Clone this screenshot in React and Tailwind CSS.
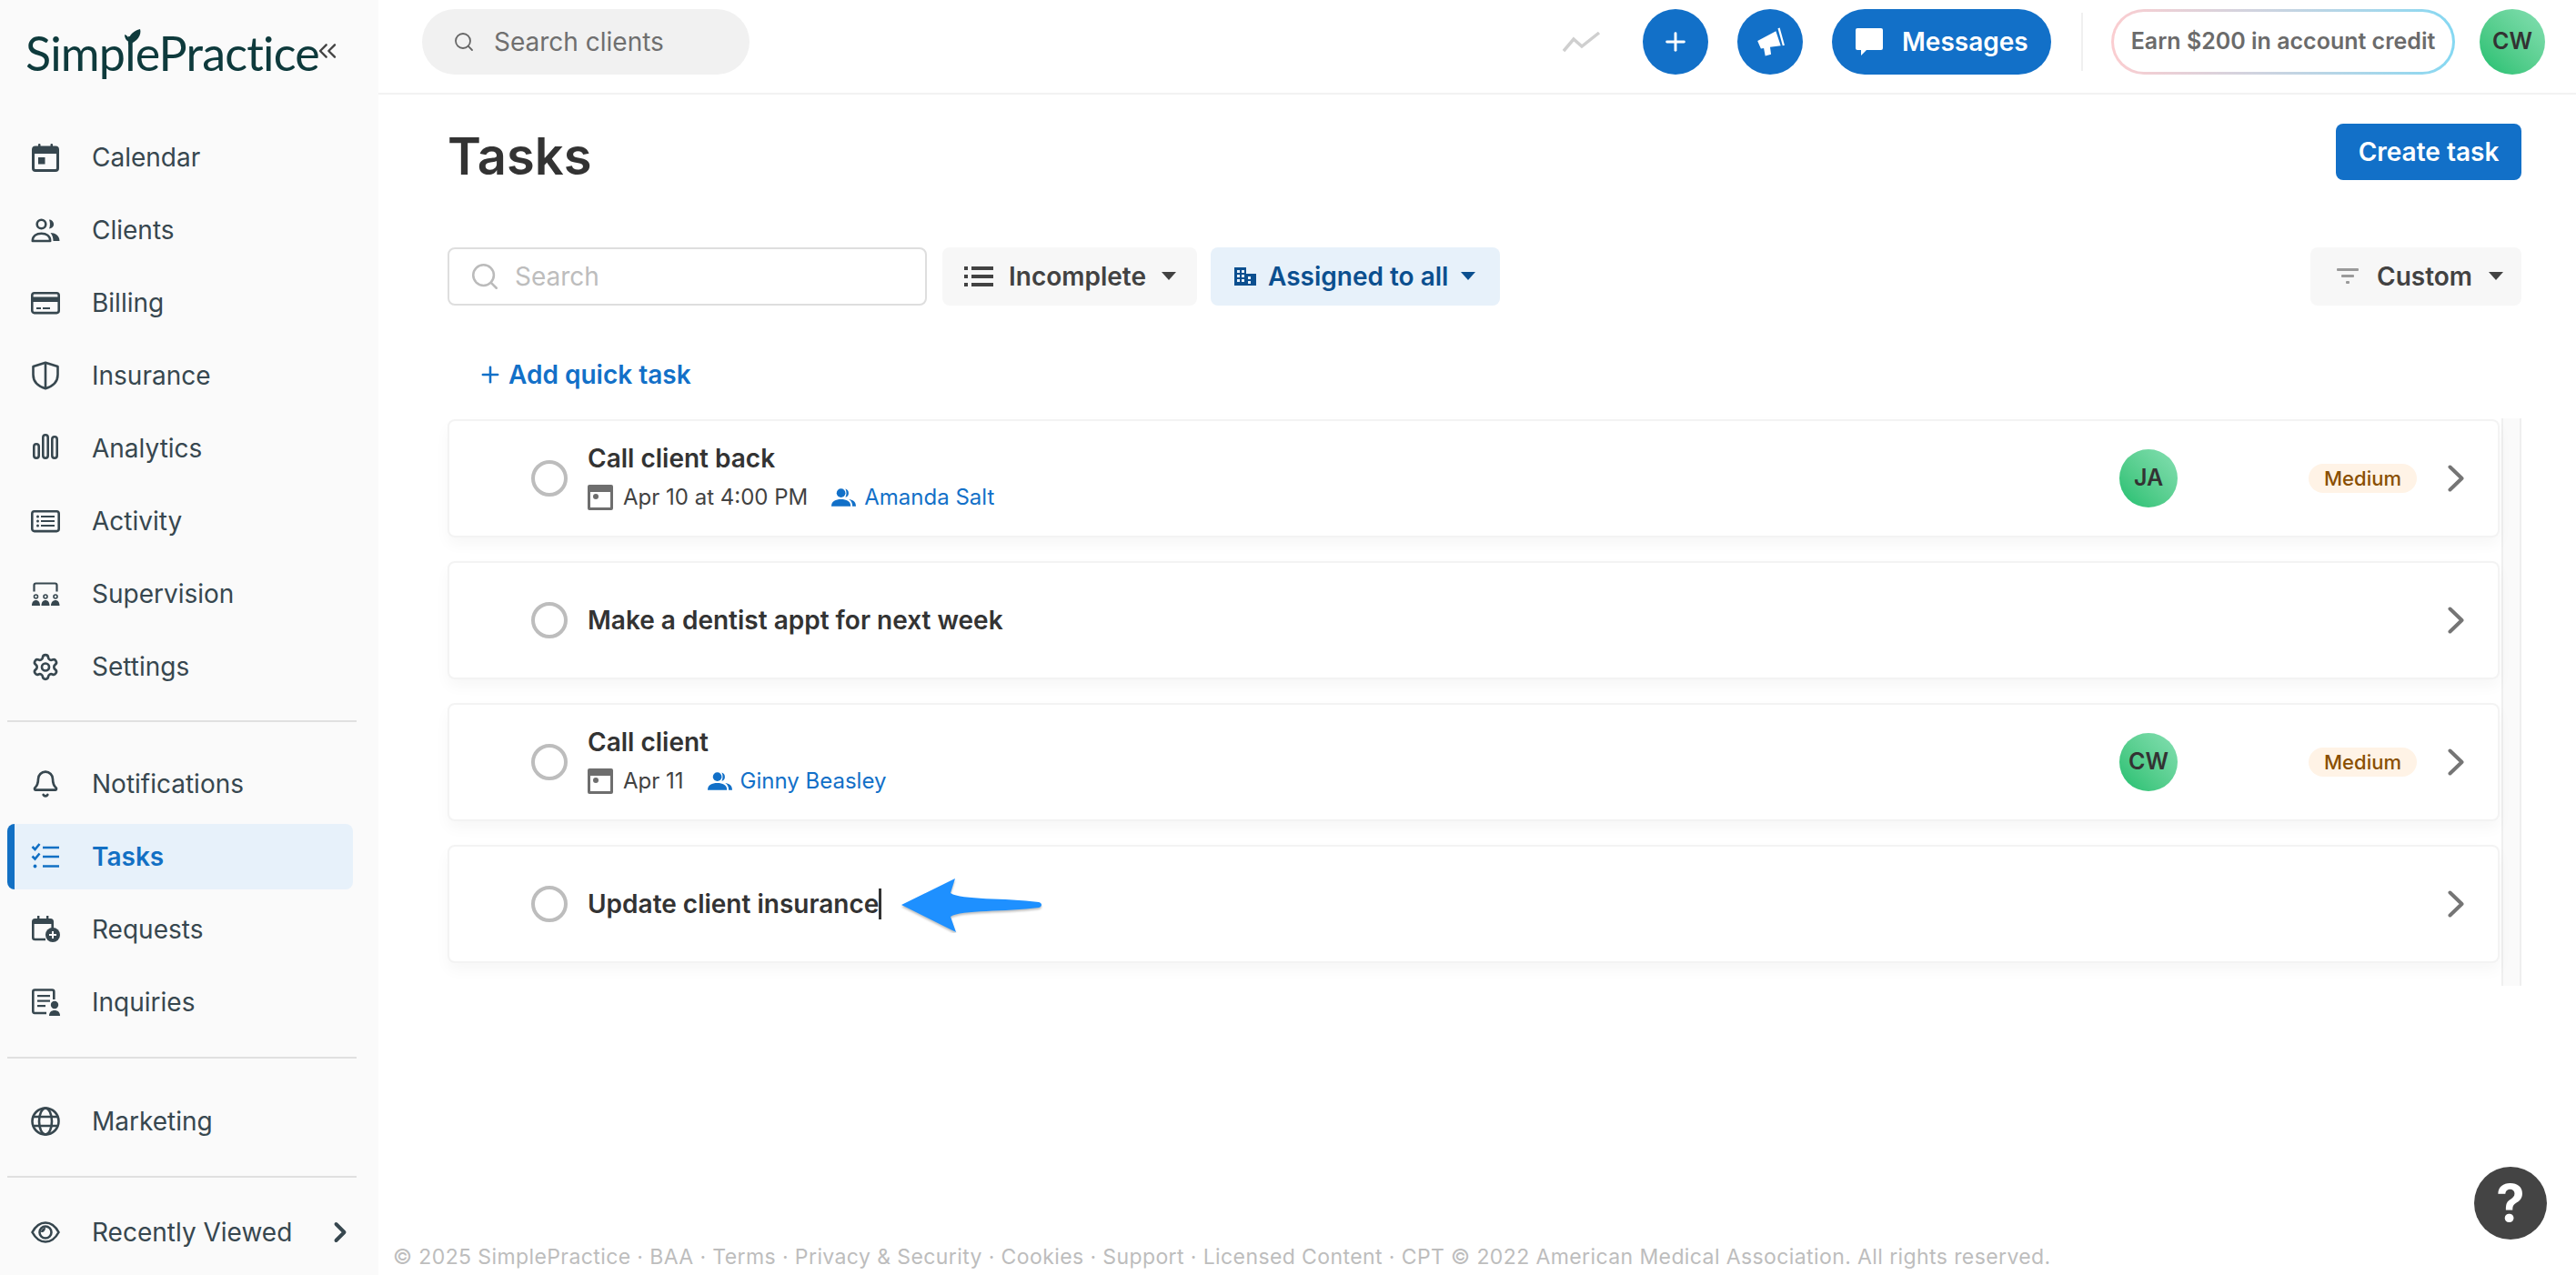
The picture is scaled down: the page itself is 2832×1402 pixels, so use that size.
import React from "react";
import { Settings, Bell, Search, ChevronRight, ChevronsLeft, Plus } from "lucide-react";

const ink = "#37474f";

const CalendarIcon = () => (
  <svg viewBox="0 0 32 32" className="w-8 h-8" fill={ink}>
    <rect x="2.5" y="5" width="27" height="25.5" rx="2.5" fill="none" stroke={ink} strokeWidth="3" />
    <rect x="2" y="5" width="28" height="7" rx="2" />
    <rect x="8" y="1" width="2.5" height="5" rx="1" />
    <rect x="21.5" y="1" width="2.5" height="5" rx="1" />
    <rect x="8" y="16" width="7.5" height="7.5" />
  </svg>
);

const ClientsIcon = () => (
  <svg viewBox="0 0 32 32" className="w-8 h-8" fill="none" stroke={ink} strokeWidth="2.6">
    <circle cx="11.5" cy="9.5" r="4.8" />
    <path d="M1.8 28c0-5.5 4.4-8.2 9.7-8.2s9.7 2.7 9.7 8.2z" strokeLinejoin="round" />
    <path d="M20 4.4a5.1 5.1 0 0 1 0 10.2c1.3-3 1.3-7.2 0-10.2z" fill={ink} stroke="none" />
    <path d="M21.5 19c5 .2 10 2.800 10 9h-7c0-3.600-1-6.600-3-9z" fill={ink} stroke="none" />
  </svg>
);

const BillingIcon = () => (
  <svg viewBox="0 0 32 32" className="w-8 h-8" fill={ink}>
    <rect x="1.3" y="5.300" width="29.400" height="21.800" rx="2.500" fill="none" stroke={ink} strokeWidth="2.600" />
    <rect x="1.500" y="9.500" width="29" height="5.500" />
    <rect x="6" y="21" width="5" height="2" />
    <rect x="13" y="21" width="8" height="2" />
  </svg>
);

const ShieldIcon = () => (
  <svg viewBox="0 0 32 32" className="w-8 h-8" fill="none" stroke={ink} strokeWidth="2.600" strokeLinejoin="round">
    <path d="M16 1.800 29.500 6v9c0 7.500-5.500 12.800-13.500 15.300C8 27.800 2.500 22.500 2.500 15V6z" />
    <path d="M16 2v28" />
  </svg>
);

const AnalyticsIcon = () => (
  <svg viewBox="0 0 32 32" className="w-8 h-8" fill="none" stroke={ink} strokeWidth="2.600">
    <rect x="3.300" y="11.300" width="5.400" height="15.400" rx="2.700" />
    <rect x="13.300" y="1.300" width="5.400" height="25.400" rx="2.700" />
    <rect x="23.300" y="3.300" width="5.400" height="23.400" rx="2.700" />
  </svg>
);

const ActivityIcon = () => (
  <svg viewBox="0 0 32 32" className="w-8 h-8" fill={ink}>
    <rect x="1.300" y="5.300" width="29.400" height="21.800" rx="2.500" fill="none" stroke={ink} strokeWidth="2.600" />
    <circle cx="7.500" cy="11" r="1.500" />
    <circle cx="7.500" cy="16" r="1.500" />
    <circle cx="7.500" cy="21" r="1.500" />
    <rect x="11" y="10" width="15" height="2" />
    <rect x="11" y="15" width="15" height="2" />
    <rect x="11" y="20" width="15" height="2" />
  </svg>
);

const SupervisionIcon = () => (
  <svg viewBox="0 0 32 32" className="w-8 h-8" fill={ink}>
    <path d="M3.500 13.500V6.500q0-2 2-2h21q2 0 2 2v7" fill="none" stroke={ink} strokeWidth="2.200" />
    <circle cx="5.500" cy="19" r="2" fill="none" stroke={ink} strokeWidth="1.600" />
    <circle cx="16" cy="19" r="2" fill="none" stroke={ink} strokeWidth="1.600" />
    <circle cx="27" cy="19" r="2" fill="none" stroke={ink} strokeWidth="1.600" />
    <path d="M1 29c0-4 2-6 4.500-6s4.500 2 4.500 6zM11.500 29c0-4 2-6 4.500-6s4.500 2 4.500 6zM22 29c0-4 2.500-6 5-6s4.500 2 4.500 6z" />
  </svg>
);

const TasksIcon = () => (
  <svg viewBox="0 0 32 32" className="w-8 h-8" fill="none" stroke="#1270c4" strokeWidth="2.600">
    <path d="m1.500 5 3 3 5-6M1.500 15.500l3 3 5-6" />
    <path d="M13 6h18M13 16h18M13 26.500h18" />
    <circle cx="4.500" cy="26.500" r="1.900" fill="#1270c4" stroke="none" />
  </svg>
);

const RequestsIcon = () => (
  <svg viewBox="0 0 32 32" className="w-8 h-8" fill={ink}>
    <path d="M16 27H4.500Q2.300 27 2.300 25V7.500q0-2.200 2.200-2.200h17q2.200 0 2.200 2.200V15" fill="none" stroke={ink} strokeWidth="2.600" />
    <rect x="2" y="5" width="22" height="5" rx="1.500" />
    <rect x="7" y="1" width="2.400" height="5" />
    <rect x="17" y="1" width="2.400" height="5" />
    <circle cx="24" cy="22" r="8" />
    <path d="M24 18v8M20 22h8" stroke="#fafafa" strokeWidth="2" />
  </svg>
);

const InquiriesIcon = () => (
  <svg viewBox="0 0 32 32" className="w-8 h-8" fill={ink}>
    <path d="M17 28H4Q2.300 28 2.300 26V4.500q0-2 2-2h19q2 0 2 2V13" fill="none" stroke={ink} strokeWidth="2.600" />
    <rect x="7" y="8" width="14" height="2.200" />
    <rect x="7" y="13.500" width="14" height="2.200" />
    <rect x="7" y="19" width="9" height="2.200" />
    <circle cx="26" cy="19" r="4.200" />
    <path d="M20 31c0-4 2.500-6 6-6s6 2 6 6z" />
  </svg>
);

const GlobeIcon = () => (
  <svg viewBox="0 0 32 32" className="w-8 h-8" fill="none" stroke={ink} strokeWidth="2.600">
    <circle cx="16" cy="16" r="14.500" />
    <ellipse cx="16" cy="16" rx="7" ry="14.500" />
    <path d="M2.500 11h27M2.500 21h27" />
  </svg>
);

const EyeIcon = () => (
  <svg viewBox="0 0 32 32" className="w-8 h-8" fill="none" stroke={ink} strokeWidth="2.600">
    <path d="M1.500 16C5 9.500 10 5.500 16 5.500S27 9.500 30.500 16C27 22.500 22 26.500 16 26.500S5 22.500 1.500 16z" />
    <circle cx="16" cy="16" r="6.500" />
    <path d="M16 11a5 5 0 0 0-5 5c3 .5 5-2 5-5z" fill={ink} stroke="none" />
  </svg>
);

const NavItem = ({ icon, label, active, children }) => (
  <div
    className={
      active
        ? "h-[72px] mx-2 w-[380px] flex items-center rounded-lg border-l-8 border-[#1270c4] bg-[#e7f1fa] pl-[18px] text-[#1270c4] font-semibold"
        : "h-[72px] mx-2 flex items-center pl-[26px] text-[#37474f]"
    }
  >
    <span className="w-8 h-8 flex items-center justify-center shrink-0">{icon}</span>
    <span className="ml-[35px] text-[28px] leading-none">{label}</span>
    {children}
  </div>
);

const Divider = () => <div className="h-[2px] ml-2 w-[384px] bg-[#e0e0e0]" />;

const Sidebar = () => (
  <aside className="w-[416px] h-[1402px] shrink-0 bg-[#fafafa] flex flex-col">
    <div className="h-[104px] relative flex items-start pl-[28px] pt-[26px] text-[#0e3a3c]">
      <span className="font-['Lato',sans-serif] text-[52px] leading-[64px] tracking-[-0.8px]">SimplePractice</span>
      <svg viewBox="0 0 20 20" className="absolute left-[136px] top-[31px] w-5 h-5" fill="#0e3a3c">
        <path d="M5 18C4 10 9 3 18 1c2 6-3 14-13 17z" />
        <path d="M1 7c3 1 5 3 5 8-3-1-5-4-5-8z" />
      </svg>
      <ChevronsLeft className="absolute left-[344px] top-[40px] w-8 h-8" color="#444" strokeWidth={1.8} />
    </div>
    <nav className="pt-[33px] flex flex-col gap-2">
      <NavItem icon={<CalendarIcon />} label="Calendar" />
      <NavItem icon={<ClientsIcon />} label="Clients" />
      <NavItem icon={<BillingIcon />} label="Billing" />
      <NavItem icon={<ShieldIcon />} label="Insurance" />
      <NavItem icon={<AnalyticsIcon />} label="Analytics" />
      <NavItem icon={<ActivityIcon />} label="Activity" />
      <NavItem icon={<SupervisionIcon />} label="Supervision" />
      <NavItem icon={<Settings className="w-[33px] h-[33px]" color={ink} strokeWidth={2} />} label="Settings" />
    </nav>
    <div className="mt-[23px]"><Divider /></div>
    <div className="pt-[32px] flex flex-col gap-2">
      <NavItem icon={<Bell className="w-8 h-8" color={ink} strokeWidth={2} />} label="Notifications" />
      <NavItem icon={<TasksIcon />} label="Tasks" active />
      <NavItem icon={<RequestsIcon />} label="Requests" />
      <NavItem icon={<InquiriesIcon />} label="Inquiries" />
    </div>
    <div className="mt-[24px]"><Divider /></div>
    <div className="pt-[33px]">
      <NavItem icon={<GlobeIcon />} label="Marketing" />
    </div>
    <div className="mt-[24px]"><Divider /></div>
    <div className="pt-[24px]">
      <NavItem icon={<EyeIcon />} label="Recently Viewed">
        <ChevronRight className="ml-auto mr-[16px] w-9 h-9" color={ink} strokeWidth={2.6} />
      </NavItem>
    </div>
  </aside>
);

const Gradient = ({ text, size }) => (
  <div className={`${size} shrink-0 rounded-full bg-gradient-to-tr from-[#17bf6f] to-[#84dfb2] flex items-center justify-center text-[25px] font-semibold text-[#333]`}>
    {text}
  </div>
);

const TopBar = () => (
  <header className="h-[104px] border-b-2 border-[#f2f2f2] flex items-start pt-[10px] pl-[48px] pr-[34px]">
    <div className="w-[360px] h-[72px] rounded-full bg-[#f1f1f1] flex items-center pl-[34px]">
      <Search className="w-[24px] h-[24px]" color="#666" strokeWidth={1.8} />
      <span className="ml-[21px] text-[28px] text-[#6f6f6f]">Search clients</span>
    </div>
    <svg viewBox="0 0 42 24" className="ml-auto mt-[24px] w-[42px] h-[24px]" fill="none" stroke="#cfcfcf" strokeWidth="3.500">
      <path d="m1 22 11-13 9 8L40 2" />
    </svg>
    <div className="ml-[46px] w-[72px] h-[72px] rounded-full bg-[#1270c8] flex items-center justify-center">
      <Plus className="w-8 h-8" color="#fff" strokeWidth={2.2} />
    </div>
    <div className="ml-8 w-[72px] h-[72px] rounded-full bg-[#1270c8] flex items-center justify-center">
      <svg viewBox="0 0 32 32" className="w-[34px] h-[34px]" fill="#fff">
        <path d="M3 15 22 5l5 15-11 1.500L17 29l-6 1.500-1.500-8-3 .5z" />
        <path d="m24 2 2-.500 5 18-2 .500z" />
      </svg>
    </div>
    <div className="ml-8 w-[241px] h-[72px] rounded-full bg-[#1270c8] flex items-center pl-[25px] text-white">
      <svg viewBox="0 0 32 32" className="w-8 h-8" fill="#fff">
        <path d="M3 1h26q2 0 2 2v20q0 2-2 2H13l-6 6v-6H3q-2 0-2-2V3q0-2 2-2z" />
      </svg>
      <span className="ml-[20px] text-[28px] font-semibold">Messages</span>
    </div>
    <div className="ml-[33px] w-[2px] h-[64px] mt-1 bg-[#f0f0f0]" />
    <div className="ml-[31px] w-[378px] h-[72px] rounded-full p-[3px] bg-gradient-to-r from-[#fbcdd0] to-[#85d8f2]">
      <div className="w-full h-full rounded-full bg-white flex items-center justify-center text-[25px] font-semibold text-[#6b6b6b]">
        Earn $200 in account credit
      </div>
    </div>
    <div className="ml-[27px]">
      <Gradient text="CW" size="w-[72px] h-[72px]" />
    </div>
  </header>
);

const Caret = ({ color }) => (
  <svg viewBox="0 0 18 10" className="w-[18px] h-[10px]" fill={color}>
    <path d="M1 0h16L9 9z" />
  </svg>
);

const Toolbar = () => (
  <div className="mt-16 h-16 flex items-stretch">
    <div className="w-[527px] rounded-lg border-2 border-[#dedede] flex items-center pl-[22px]">
      <Search className="w-[34px] h-[34px]" color="#bbb" strokeWidth={1.8} />
      <span className="ml-[16px] text-[28px] text-[#bdbdbd]">Search</span>
    </div>
    <div className="ml-[17px] w-[280px] rounded-lg bg-[#f7f7f7] flex items-center pl-[24px] text-[#424242]">
      <svg viewBox="0 0 32 24" className="w-8 h-6" fill="#424242">
        <rect x="0" y="1" width="4" height="4" />
        <rect x="0" y="10" width="4" height="4" />
        <rect x="0" y="19" width="4" height="4" />
        <rect x="8" y="1" width="24" height="4" />
        <rect x="8" y="10" width="24" height="4" />
        <rect x="8" y="19" width="24" height="4" />
      </svg>
      <span className="ml-[17px] text-[28px] font-semibold">Incomplete</span>
      <span className="ml-[16px]"><Caret color="#424242" /></span>
    </div>
    <div className="ml-[15px] w-[318px] rounded-lg bg-[#e7f1fa] flex items-center pl-[25px] text-[#0b4f8f]">
      <svg viewBox="0 0 26 24" className="w-[26px] h-6" fill="#0b4f8f">
        <path d="M1 2h13v7h11v13H1zM4 5v3h3V5zm5 0v3h3V5zM4 10v3h3v-3zm5 0v3h3v-3zm7 2v3h3v-3zm0 5v3h3v-3zM4 15v3h3v-3zm5 0v3h3v-3z" fillRule="evenodd" />
      </svg>
      <span className="ml-[12px] text-[28px] font-semibold">Assigned to all</span>
      <span className="ml-[13px]"><Caret color="#0b4f8f" /></span>
    </div>
    <div className="ml-auto w-[232px] rounded-lg bg-[#f7f7f7] flex items-center pl-[29px] text-[#424242]">
      <svg viewBox="0 0 24 20" className="w-6 h-5" fill="#9a9a9a">
        <rect x="0" y="1" width="24" height="3" rx="1" />
        <rect x="5" y="8" width="14" height="3" rx="1" />
        <rect x="10" y="15" width="4" height="3" rx="1" />
      </svg>
      <span className="ml-[20px] text-[28px] font-semibold">Custom</span>
      <span className="ml-[17px]"><Caret color="#424242" /></span>
    </div>
  </div>
);

const People = () => (
  <svg viewBox="0 0 28 22" className="w-[27px] h-[22px]" fill="#1270c8">
    <circle cx="11" cy="6" r="5" />
    <path d="M0 21c0-6 5-8 11-8s11 2 11 8z" />
    <path d="M16 1.200a5 5 0 0 1 0 9.600c1.500-3 1.500-6.600 0-9.600zM20 13c4 .5 8 2.500 8 8h-4c0-3-1-6-4-8z" />
  </svg>
);

const TaskCard = ({ title, when, person, avatar, caret, arrow }) => (
  <div className="relative h-[130px] rounded-lg border-2 border-[#f3f3f3] bg-white shadow-[0_8px_16px_rgba(0,0,0,0.035)] flex items-center pl-[90px]">
    <div className="w-10 h-10 shrink-0 rounded-full border-[4px] border-[#bdbdbd]" />
    <div className={when ? "ml-[22px] pb-1" : "ml-[22px]"}>
      <div className="flex items-center h-[38px] text-[28px] font-semibold text-[#333]">
        {title}
        {caret && <span className="w-[3px] h-[34px] bg-[#333]" />}
      </div>
      {when && (
        <div className="mt-2 h-8 flex items-center text-[24px] text-[#424242]">
          <svg viewBox="0 0 28 30" className="w-7 h-[30px]" fill="#6e6e6e">
            <path d="M2 1h24q2 0 2 2v24q0 2-2 2H2q-2 0-2-2V3q0-2 2-2zm1 8v17h22V9z" fillRule="evenodd" />
            <circle cx="9" cy="14" r="3" />
          </svg>
          <span className="ml-[11px]">{when}</span>
          <span className="ml-[26px]"><People /></span>
          <span className="ml-[9px] text-[#1270c8]">{person}</span>
        </div>
      )}
    </div>
    {avatar && (
      <div className="ml-auto flex items-center">
        <Gradient text={avatar} size="w-16 h-16" />
        <div className="ml-[144px] w-[119px] h-8 rounded-full bg-[#fff3e6] flex items-center justify-center text-[22px] font-medium text-[#8a4f00]">
          Medium
        </div>
      </div>
    )}
    <svg viewBox="0 0 18 30" className={avatar ? "ml-[34px] mr-[37px] w-[18px] h-[30px]" : "ml-auto mr-[37px] w-[18px] h-[30px]"} fill="none" stroke="#757575" strokeWidth="4" strokeLinecap="round" strokeLinejoin="round">
      <path d="m2.500 2.500 13 12.500-13 12.500" />
    </svg>
    {arrow && (
      <svg viewBox="0 0 166 62" className="absolute left-[495px] top-[33px] w-[166px] h-[62px]" fill="#1e90ff">
        <path d="M2 31 61 2l-5 16c12 8 60 5 97 10 4 1 4 5 0 6-37 5-85 2-97 10l6 17z" style={{ filter: "drop-shadow(0 2px 1px rgba(0,0,0,0.25))" }} />
      </svg>
    )}
  </div>
);

export default function App() {
  return (
    <div className="w-[2832px] h-[1402px] flex bg-white overflow-hidden font-['Inter',sans-serif] relative">
      <Sidebar />
      <main className="flex-1 flex flex-col min-w-0">
        <TopBar />
        <div className="pl-[76px] pr-[60px]">
          <div className="flex items-start mt-8">
            <h1 className="text-[56px] leading-[72px] font-semibold text-[#333]">Tasks</h1>
            <button className="ml-auto w-[204px] h-[62px] rounded-lg bg-[#1270c8] text-white text-[28px] font-semibold">
              Create task
            </button>
          </div>
          <Toolbar />
          <div className="mt-[56px] h-10 pl-[33px] flex items-center text-[#1270c8] text-[28px] font-semibold">
            <Plus className="w-7 h-7" strokeWidth={2.2} />
            <span className="ml-[6px]">Add quick task</span>
          </div>
          <div className="mt-[28px] flex">
            <div className="w-[2256px] pt-[1px] pb-[25px] flex flex-col gap-[26px]">
              <TaskCard title="Call client back" when="Apr 10 at 4:00 PM" person="Amanda Salt" avatar="JA" />
              <TaskCard title="Make a dentist appt for next week" />
              <TaskCard title="Call client" when="Apr 11" person="Ginny Beasley" avatar="CW" />
              <TaskCard title="Update client insurance" caret arrow />
            </div>
            <div className="ml-[2px] w-[22px] bg-[#fafafa] border-x-2 border-[#efefef]" />
          </div>
        </div>
        <footer className="mt-auto pl-[16px] pb-[6px] text-[23px] leading-[28px] tracking-[0.4px] text-[#bdbdbd]">
          © 2025 SimplePractice · BAA · Terms · Privacy &amp; Security · Cookies · Support · Licensed Content · CPT © 2022 American Medical Association. All rights reserved.
        </footer>
      </main>
      <div className="absolute left-[2720px] top-[1283px] w-20 h-20 rounded-full bg-[#444] flex items-center justify-center text-white text-[56px] font-bold">
        ?
      </div>
    </div>
  );
}
